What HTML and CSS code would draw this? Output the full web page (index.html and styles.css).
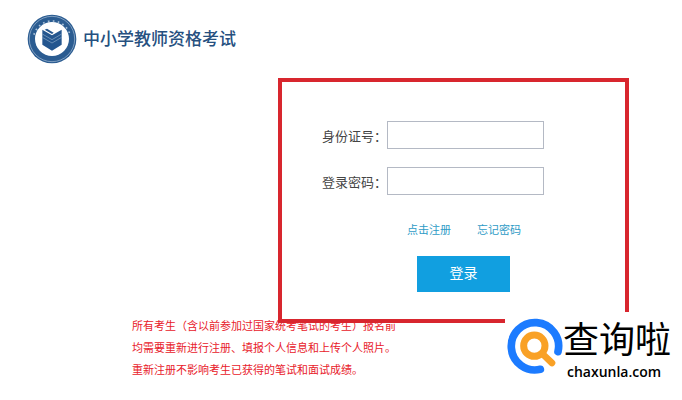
FILE: index.html
```html
<!DOCTYPE html>
<html lang="zh-CN">
<head>
    <meta charset="UTF-8">
    <title>中小学教师资格考试</title>
    <link rel="stylesheet" href="styles.css">
</head>
<body>
    <header class="header">
        <svg class="emblem" viewBox="0 0 150 150" aria-hidden="true">
            <circle cx="75" cy="75" r="73" fill="#2b5c91"/>
            <circle cx="75" cy="75" r="68" fill="none" stroke="#a9c0d8" stroke-width="2"/>
            <path d="M21 62A56 56 0 0 1 129 62" fill="none" stroke="#a9c0d8" stroke-width="5" stroke-dasharray="5 10"/>
            <circle cx="75" cy="75" r="51" fill="#fff"/>
            <path d="M46 47L75 64L104 47V92L75 110L46 92Z" fill="#24568f"/>
            <path d="M46 60L75 77L104 60M46 70L75 87L104 70" fill="none" stroke="#8dabc9" stroke-width="2"/>
            <path d="M53 47L75 60L80 56L60 44Z" fill="#24568f"/>
        </svg>
        <h1>中小学教师资格考试</h1>
    </header>

    <main>
        <form class="login-box">
            <div class="field">
                <label for="idNumber">身份证号：</label>
                <input type="text" id="idNumber">
            </div>
            <div class="field">
                <label for="password">登录密码：</label>
                <input type="password" id="password">
            </div>
            <div class="links">
                <a href="#">点击注册</a>
                <a href="#">忘记密码</a>
            </div>
            <button type="submit">登录</button>
        </form>

        <p class="notice">
            所有考生（含以前参加过国家统考笔试的考生）报名前<br>
            均需要重新进行注册、填报个人信息和上传个人照片。<br>
            重新注册不影响考生已获得的笔试和面试成绩。
        </p>
    </main>

    <div class="brand">
        <svg class="brand-icon" viewBox="0 0 168 168" aria-hidden="true">
            <path d="M153 101A71 71 0 1 0 100 154" fill="none" stroke="#1c7bff" stroke-width="23" stroke-linecap="round"/>
            <circle cx="82" cy="83" r="32" fill="none" stroke="#f9a126" stroke-width="21"/>
            <path d="M108 109L135 135" stroke="#f9a126" stroke-width="20" stroke-linecap="round"/>
        </svg>
        <div class="brand-text">
            <span class="brand-name">查询啦</span>
            <span class="brand-domain">chaxunla.com</span>
        </div>
    </div>
</body>
</html>
```

FILE: styles.css
```css
* {
    box-sizing: border-box;
}
body {
    margin: 0;
    font-family: "Liberation Sans", "Noto Sans CJK SC", sans-serif;
    background-color: #fff;
    color: #444;
}
.header {
    display: flex;
    align-items: center;
    gap: 6px;
    padding: 14px 27px;
}
.emblem {
    width: 50px;
    height: 50px;
}
h1 {
    margin: 0 0 4px;
    font-size: 17px;
    font-weight: 500;
    color: #26507f;
}
.login-box {
    position: relative;
    display: flex;
    flex-direction: column;
    gap: 18px;
    margin: 0 53px 0 278px;
    padding: 39px 40px 27px;
    border: 4px solid #d8262e;
    background-color: #fff;
}
.field {
    display: flex;
    align-items: center;
}
label {
    font-size: 13px;
}
.field input {
    width: 157px;
    height: 28px;
    padding: 0 6px;
    border: 1px solid #b4b9c4;
}
.links {
    display: flex;
    gap: 26px;
    margin: 9px 0 0 85px;
    font-size: 11px;
    line-height: 16px;
}
.links a {
    color: #2e9bc6;
    text-decoration: none;
}
button {
    width: 93px;
    height: 36px;
    margin-left: 95px;
    padding: 0 0 4px;
    border: none;
    background-color: #119fe0;
    color: #fff;
    font-family: inherit;
    font-size: 14px;
    cursor: pointer;
}
.notice {
    margin: -8px 0 0 132px;
    font-size: 11px;
    line-height: 22px;
    color: #e8202a;
}
.brand {
    position: absolute;
    right: 0;
    bottom: 0;
    display: flex;
    align-items: flex-start;
    padding: 6px 11px 20px 2px;
    background-color: #fff;
}
.brand-icon {
    width: 56px;
    height: 56px;
}
.brand-text {
    display: flex;
    flex-direction: column;
    color: #000;
}
.brand-name {
    font-size: 36px;
    line-height: 46px;
}
.brand-domain {
    padding-left: 4px;
    font-family: "Open Sans", sans-serif;
    font-size: 14px;
    font-weight: 600;
    line-height: 16px;
}
```
